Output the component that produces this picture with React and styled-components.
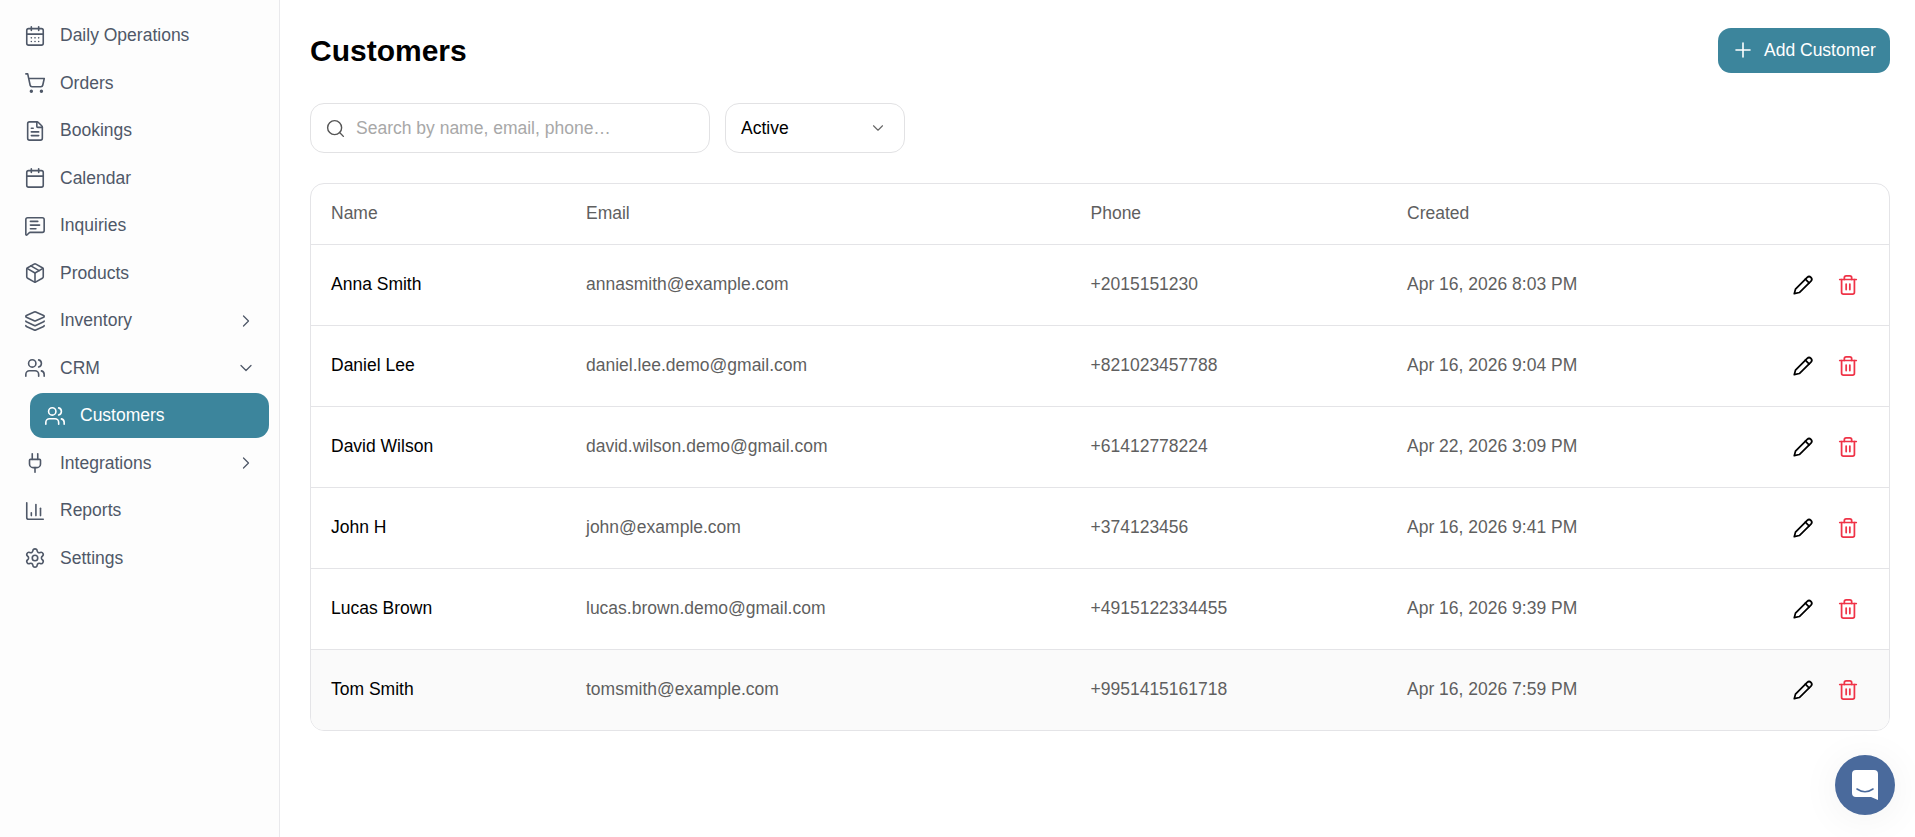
import React from 'react';
import styled, { createGlobalStyle } from 'styled-components';
import {
  CalendarDays, ShoppingCart, FileText, Calendar, MessageSquareText, Package, Layers,
  Users, Plug, ChartColumn, Settings, ChevronRight, ChevronDown, Search, Plus, Trash2,
} from 'lucide-react';

const GlobalStyle = createGlobalStyle`
  html, body { margin: 0; padding: 0; height: 100%; background: #fff; }
  body { font-family: "Liberation Sans", Arial, sans-serif; color: #000; overflow: hidden; }
  #root { height: 100%; }
  * { box-sizing: border-box; }
`;

const Layout = styled.div`
  display: flex;
  height: 837px;
`;

const Sidebar = styled.aside`
  width: 280px;
  flex-shrink: 0;
  background: #fdfdfd;
  border-right: 1px solid #e9e9ec;
  padding: 12px 10px 0 24px;
  display: flex;
  flex-direction: column;
`;

const NavItem = styled.div`
  height: 47.5px;
  display: flex;
  align-items: center;
  gap: 14px;
  padding-right: 13.5px;
  color: #4f5868;
  font-size: 17.5px;
`;

const NavLabel = styled.span`
  flex: 1;
`;

const ActiveItem = styled.div`
  height: 45px;
  margin: 1px 0 1.5px 6px;
  padding-left: 14px;
  display: flex;
  align-items: center;
  gap: 14px;
  border-radius: 13px;
  background: #3c859c;
  color: #fff;
  font-size: 17.5px;
`;

const Main = styled.main`
  flex: 1;
  padding: 28px 25px 0 30px;
`;

const Header = styled.div`
  display: flex;
  justify-content: space-between;
  align-items: center;
  height: 45px;
`;

const Title = styled.h1`
  margin: 0;
  font-size: 30px;
  font-weight: 700;
`;

const AddButton = styled.button`
  height: 45px;
  width: 172px;
  padding: 0 0 1px 13px;
  display: flex;
  align-items: center;
  gap: 9px;
  border: 0;
  border-radius: 13px;
  background: #3c859c;
  color: #fff;
  font: 17.5px "Liberation Sans", Arial, sans-serif;
`;

const Filters = styled.div`
  display: flex;
  gap: 15px;
  margin-top: 30px;
`;

const SearchBox = styled.div`
  width: 400px;
  height: 50px;
  padding: 0 14px;
  display: flex;
  align-items: center;
  gap: 10px;
  background: #fff;
  border: 1px solid #e2e2e4;
  border-radius: 14px;
  color: #555;
`;

const SearchInput = styled.input`
  flex: 1;
  min-width: 0;
  padding: 0;
  border: 0;
  outline: 0;
  background: transparent;
  font: 17.5px "Liberation Sans", Arial, sans-serif;
  &::placeholder { color: #a8a8a8; opacity: 1; }
`;

const SelectBox = styled.div`
  width: 180px;
  height: 50px;
  padding: 0 17px 0 15px;
  display: flex;
  align-items: center;
  justify-content: space-between;
  border: 1px solid #e2e2e4;
  border-radius: 14px;
  font-size: 17.5px;
  color: #666;
`;

const SelectValue = styled.span`
  color: #000;
`;

const TableCard = styled.div`
  margin-top: 30px;
  border: 1px solid #e4e4e7;
  border-radius: 14px;
  overflow: hidden;
`;

const Table = styled.table`
  width: 100%;
  border-collapse: collapse;
  table-layout: fixed;
  font-size: 17.5px;
`;

const HeadCell = styled.th`
  height: 60px;
  padding: 0 20px;
  text-align: left;
  font-weight: 400;
  color: #5f5f5f;
  width: ${p => p.$width || 'auto'};
`;

const Row = styled.tr`
  height: 81px;
  border-top: 1px solid #e4e4e7;
  background: ${p => (p.$hover ? '#fafafa' : 'transparent')};
`;

const Cell = styled.td`
  padding: 0 20px;
  color: ${p => (p.$primary ? '#000' : '#5f5f5f')};
`;

const Actions = styled.div`
  display: flex;
  justify-content: flex-end;
  align-items: center;
  gap: 23px;
  padding-right: 10px;
`;

const ChatBubble = styled.div`
  position: fixed;
  right: 20px;
  bottom: 22px;
  width: 60px;
  height: 60px;
  display: flex;
  align-items: center;
  justify-content: center;
  border-radius: 50%;
  background: #4a6a9c;
  box-shadow: 0 4px 40px rgba(0, 0, 0, 0.06);
`;

const navTop = [
  ['Daily Operations', CalendarDays],
  ['Orders', ShoppingCart],
  ['Bookings', FileText],
  ['Calendar', Calendar],
  ['Inquiries', MessageSquareText],
  ['Products', Package],
  ['Inventory', Layers, ChevronRight],
  ['CRM', Users, ChevronDown],
];

const navBottom = [
  ['Integrations', Plug, ChevronRight],
  ['Reports', ChartColumn],
  ['Settings', Settings],
];

const customers = [
  ['Anna Smith', 'annasmith@example.com', '+2015151230', 'Apr 16, 2026 8:03 PM'],
  ['Daniel Lee', 'daniel.lee.demo@gmail.com', '+821023457788', 'Apr 16, 2026 9:04 PM'],
  ['David Wilson', 'david.wilson.demo@gmail.com', '+61412778224', 'Apr 22, 2026 3:09 PM'],
  ['John H', 'john@example.com', '+374123456', 'Apr 16, 2026 9:41 PM'],
  ['Lucas Brown', 'lucas.brown.demo@gmail.com', '+4915122334455', 'Apr 16, 2026 9:39 PM'],
  ['Tom Smith', 'tomsmith@example.com', '+9951415161718', 'Apr 16, 2026 7:59 PM'],
];

const PencilIcon = () => (
  <svg width="22" height="22" viewBox="0 0 24 24" fill="none" stroke="#000" strokeWidth="1.9" strokeLinejoin="round" strokeLinecap="round">
    <path d="M2.5 21.5l1.3-5L16.6 3.7a2.9 2.9 0 0 1 4.1 4.1L8 20.2z" />
    <path d="M14.6 5.7l4 4" />
  </svg>
);

const renderNav = items =>
  items.map(([label, Icon, Chevron]) => (
    <NavItem key={label}>
      <Icon size={22} strokeWidth={1.75} />
      <NavLabel>{label}</NavLabel>
      {Chevron && <Chevron size={20} strokeWidth={1.5} />}
    </NavItem>
  ));

const App = () => {
  return (
    <Layout>
      <GlobalStyle />
      <Sidebar>
        {renderNav(navTop)}
        <ActiveItem>
          <Users size={22} strokeWidth={1.75} />
          <span>Customers</span>
        </ActiveItem>
        {renderNav(navBottom)}
      </Sidebar>
      <Main>
        <Header>
          <Title>Customers</Title>
          <AddButton>
            <Plus size={24} strokeWidth={1.6} />
            Add Customer
          </AddButton>
        </Header>
        <Filters>
          <SearchBox>
            <Search size={21} strokeWidth={1.6} />
            <SearchInput placeholder="Search by name, email, phone…" />
          </SearchBox>
          <SelectBox>
            <SelectValue>Active</SelectValue>
            <ChevronDown size={18} strokeWidth={1.5} />
          </SelectBox>
        </Filters>
        <TableCard>
          <Table>
            <thead>
              <tr>
                <HeadCell $width="255px">Name</HeadCell>
                <HeadCell $width="504.5px">Email</HeadCell>
                <HeadCell $width="316.5px">Phone</HeadCell>
                <HeadCell $width="300px">Created</HeadCell>
                <HeadCell />
              </tr>
            </thead>
            <tbody>
              {customers.map((c, i) => (
                <Row key={c[0]} $hover={i === customers.length - 1}>
                  <Cell $primary>{c[0]}</Cell>
                  <Cell>{c[1]}</Cell>
                  <Cell>{c[2]}</Cell>
                  <Cell>{c[3]}</Cell>
                  <Cell>
                    <Actions>
                      <PencilIcon />
                      <Trash2 size={22} strokeWidth={1.9} color="#ef3347" />
                    </Actions>
                  </Cell>
                </Row>
              ))}
            </tbody>
          </Table>
        </TableCard>
      </Main>
      <ChatBubble>
        <svg width="28" height="32" viewBox="0 0 28 32">
          <path d="M5 1h18a4 4 0 0 1 4 4v26l-7-3H5a4 4 0 0 1-4-4V5a4 4 0 0 1 4-4z" fill="#fff" />
          <path d="M6 20c5 3.4 11 3.4 16 0" fill="none" stroke="#4a6a9c" strokeWidth="1.6" strokeLinecap="round" />
        </svg>
      </ChatBubble>
    </Layout>
  );
};

export default App;
